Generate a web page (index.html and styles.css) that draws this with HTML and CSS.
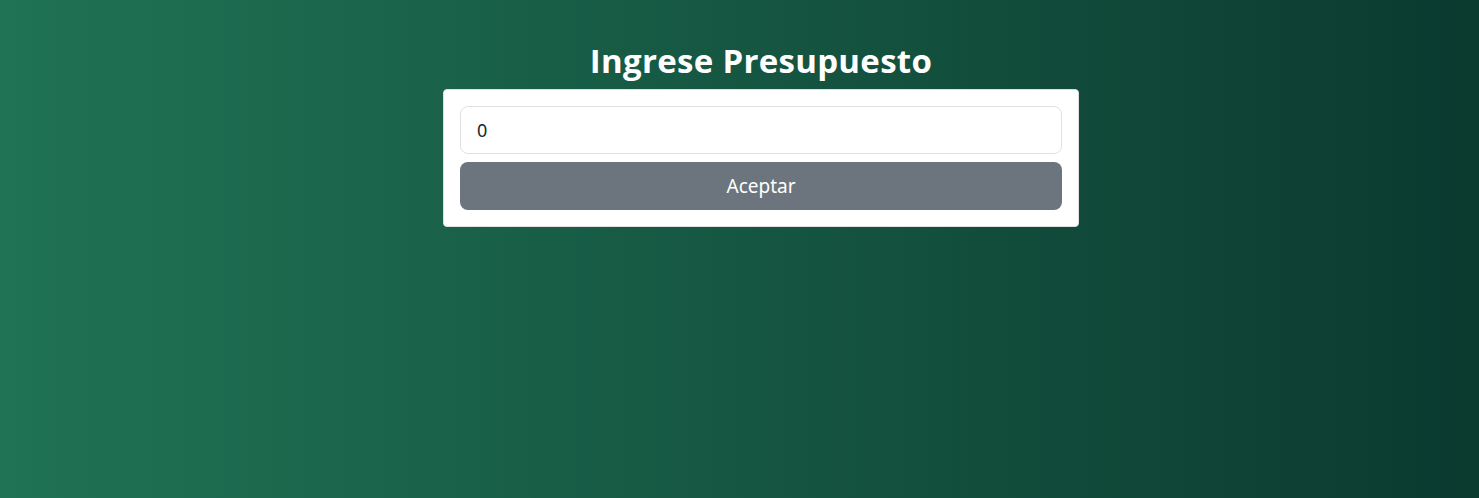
FILE: index.html
```html
<!DOCTYPE html>
<html lang="es">
<head>
<meta charset="utf-8">
<title>Presupuesto</title>
<link rel="stylesheet" href="styles.css">
</head>
<body>
<main class="page">
  <h1 class="title">Ingrese Presupuesto</h1>
  <form class="card">
    <input class="field" type="number" value="0">
    <button class="btn" type="button">Aceptar</button>
  </form>
</main>
</body>
</html>
```
FILE: styles.css
```css
html, body {
  margin: 0;
  height: 100%;
}
body {
  background: linear-gradient(to right, #207355 0%, #0b3a2f 100%);
  font-family: "Noto Sans", "Open Sans", sans-serif;
}
.page {
  display: flex;
  flex-direction: column;
  align-items: center;
  padding-top: 41px;
  padding-left: 43px;
}
.title {
  margin: 0 0 8px;
  color: #fff;
  font-family: "Open Sans", sans-serif;
  font-weight: 700;
  font-size: 33px;
  line-height: 40px;
  letter-spacing: 0.3px;
}
.card {
  width: 636px;
  box-sizing: border-box;
  background: #fff;
  border: 1px solid #e0e0e0;
  border-radius: 4px;
  padding: 16px;
  display: flex;
  flex-direction: column;
  gap: 8px;
}
.field {
  height: 48px;
  box-sizing: border-box;
  border: 1px solid #dee2e6;
  border-radius: 8px;
  padding: 0 16px;
  font-family: "Noto Sans", sans-serif;
  font-size: 18px;
  color: #212529;
  outline: none;
}
.field::-webkit-inner-spin-button { -webkit-appearance: none; }
.btn {
  height: 48px;
  border: none;
  border-radius: 8px;
  background: #6c757d;
  color: #fff;
  font-family: "Noto Sans", sans-serif;
  font-size: 19px;
}
```
